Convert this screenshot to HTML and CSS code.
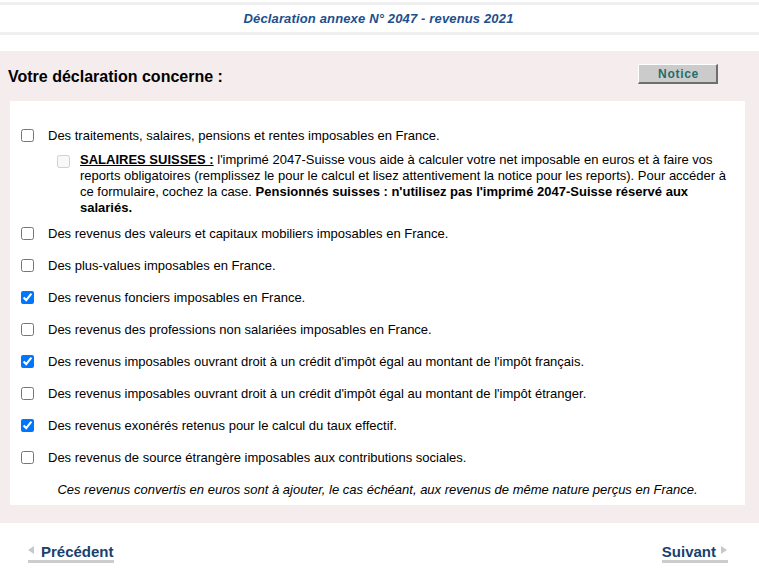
FILE: index.html
```html
<!DOCTYPE html>
<html lang="fr">
<head>
<meta charset="utf-8">
<title>Déclaration annexe N° 2047</title>
<link rel="stylesheet" href="styles.css">
</head>
<body>
<div class="topbar"><span class="topbar-title">Déclaration annexe N° 2047 - revenus 2021</span></div>

<div class="panel">
  <div class="panel-head">
    <h1 class="panel-title">Votre déclaration concerne :</h1>
    <button class="notice-btn" type="button">Notice</button>
  </div>
  <div class="card">
    <label class="row"><input type="checkbox" class="cb"><span>Des traitements, salaires, pensions et rentes imposables en France.</span></label>
    <div class="sub">
      <input type="checkbox" class="cb sub-cb" disabled>
      <p class="sub-text"><b class="u">SALAIRES SUISSES :</b> l'imprimé 2047-Suisse vous aide à calculer votre net imposable en euros et à faire vos reports obligatoires (remplissez le pour le calcul et lisez attentivement la notice pour les reports). Pour accéder à ce formulaire, cochez la case. <b>Pensionnés suisses : n'utilisez pas l'imprimé 2047-Suisse réservé aux salariés.</b></p>
    </div>
    <label class="row"><input type="checkbox" class="cb"><span>Des revenus des valeurs et capitaux mobiliers imposables en France.</span></label>
    <label class="row"><input type="checkbox" class="cb"><span>Des plus-values imposables en France.</span></label>
    <label class="row"><input type="checkbox" class="cb" checked><span>Des revenus fonciers imposables en France.</span></label>
    <label class="row"><input type="checkbox" class="cb"><span>Des revenus des professions non salariées imposables en France.</span></label>
    <label class="row"><input type="checkbox" class="cb" checked><span>Des revenus imposables ouvrant droit à un crédit d'impôt égal au montant de l'impôt français.</span></label>
    <label class="row"><input type="checkbox" class="cb"><span>Des revenus imposables ouvrant droit à un crédit d'impôt égal au montant de l'impôt étranger.</span></label>
    <label class="row"><input type="checkbox" class="cb" checked><span>Des revenus exonérés retenus pour le calcul du taux effectif.</span></label>
    <label class="row"><input type="checkbox" class="cb"><span>Des revenus de source étrangère imposables aux contributions sociales.</span></label>
    <p class="footnote">Ces revenus convertis en euros sont à ajouter, le cas échéant, aux revenus de même nature perçus en France.</p>
  </div>
</div>

<nav class="nav">
  <a class="nav-link" href="#"><span class="arrow arrow-left"></span>Précédent</a>
  <a class="nav-link" href="#">Suivant<span class="arrow arrow-right"></span></a>
</nav>
</body>
</html>
```

FILE: styles.css
```css
html, body {
  margin: 0;
  padding: 0;
  background: #ffffff;
  font-family: "Liberation Sans", Arial, sans-serif;
  color: #000;
}

.topbar {
  margin-top: 2px;
  border-top: 3px solid #efefef;
  border-bottom: 3px solid #efefef;
  height: 27px;
  display: flex;
  align-items: center;
  justify-content: center;
}

.topbar-title {
  font-size: 13px;
  font-weight: bold;
  font-style: italic;
  color: #1d4f8c;
  letter-spacing: 0.15px;
  margin-right: 2px;
}

.panel {
  margin-top: 16px;
  background: #f5eded;
  padding: 0 14px 18px 10px;
}

.panel-head {
  height: 50px;
  display: flex;
  align-items: center;
  justify-content: space-between;
  padding-right: 27px;
}

.panel-title {
  margin: 0 0 0 -2px;
  font-size: 16px;
  font-weight: bold;
  padding-top: 1px;
}

.notice-btn {
  width: 80px;
  height: 20px;
  margin: -4px 0 0 0;
  padding: 0;
  background: #cbcbcb;
  border-style: solid;
  border-width: 1px 2px 2px 1px;
  border-color: #ffffff #6e6e6e #6e6e6e #ffffff;
  color: #1f6e6e;
  font-family: "Liberation Sans", Arial, sans-serif;
  font-size: 12px;
  font-weight: bold;
  letter-spacing: 0.7px;
  text-indent: 2px;
}

.card {
  background: #ffffff;
  padding: 18px 8px 0 11px;
}

.row {
  display: flex;
  align-items: center;
  height: 32px;
  font-size: 13px;
}

.cb {
  width: 13px;
  height: 13px;
  margin: 0;
  flex: none;
}

.row .cb {
  margin-right: 14px;
}

.sub {
  display: flex;
  align-items: flex-start;
  padding: 1px 0 1px 36px;
}

.sub-cb {
  margin-top: 3px;
  margin-right: 10px;
}

.sub-text {
  margin: 0;
  font-size: 13px;
  line-height: 16px;
}

.u {
  text-decoration: underline;
}

.footnote {
  margin: 0 -8px 0 -11px;
  padding: 8px 0 6px;
  line-height: 18px;
  font-size: 13px;
  font-style: italic;
  text-align: center;
}

.nav {
  display: flex;
  justify-content: space-between;
  align-items: flex-start;
  padding: 20px 31px 0 28px;
}

.nav-link {
  display: inline-flex;
  align-items: center;
  font-size: 15px;
  line-height: 17px;
  font-weight: bold;
  color: #17416e;
  text-decoration: none;
  border-bottom: 3px solid #cccccc;
}

.arrow {
  width: 0;
  height: 0;
  border-top: 4px solid transparent;
  border-bottom: 4px solid transparent;
  margin-top: -3px;
}

.arrow-left {
  border-right: 6px solid #c8c8c8;
  margin-right: 7px;
}

.arrow-right {
  border-left: 6px solid #c8c8c8;
  margin-left: 5px;
  margin-right: 1px;
}
```
